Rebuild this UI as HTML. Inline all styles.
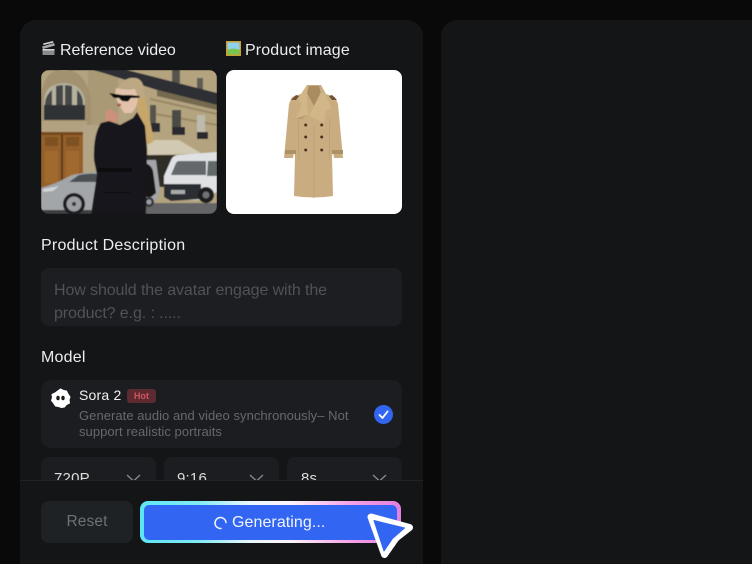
<!DOCTYPE html>
<html><head><meta charset="utf-8"><style>
*{box-sizing:border-box;margin:0;padding:0}
html,body{width:752px;height:564px;overflow:hidden;background:#09090a}
body{position:relative;font-family:"Liberation Sans",sans-serif}
.a{position:absolute}
.t{position:absolute;white-space:nowrap}
</style></head><body>
<div class="a" style="left:20px;top:20px;width:403px;height:560px;background:#141517;border-radius:16px"></div>
<div class="a" style="left:441px;top:20px;width:330px;height:560px;background:#141517;border-radius:16px"></div>

<svg class="a" style="left:41px;top:41px" width="16" height="16" viewBox="0 0 16 16"><path d="M1 5.500l12-3.500 1 2.500-12 3.500z" fill="#a8a8a8"/><path d="M2 2.500l10-2.500.5 1.500-10 2.500z" fill="#d8d8d8"/><path d="M1.500 8h12v6h-12z" fill="#8a8a8a"/><path d="M1.500 8h12v1.500h-12z" fill="#d5d5d5"/></svg>
<div class="t" style="left:60px;top:42px;font-size:16px;line-height:18px;color:#eceded;letter-spacing:-.05px">Reference video</div>
<svg class="a" style="left:226px;top:41px" width="15" height="15" viewBox="0 0 15 15"><rect width="15" height="15" fill="#c9a032"/><rect x="1.500" y="1.500" width="12" height="12" fill="#8fd0ee"/><path d="M1.500 9q5-3 12 0v4.500h-12z" fill="#79c552"/></svg>
<div class="t" style="left:245px;top:42px;font-size:16px;line-height:18px;color:#eceded;letter-spacing:.13px">Product image</div>

<svg class="a" style="left:41px;top:70px;border-radius:8px" width="176" height="144" viewBox="41 70 176 144">
<defs><filter id="b" x="-5%" y="-5%" width="110%" height="110%"><feGaussianBlur stdDeviation=".5"/></filter></defs>
<g filter="url(#b)">
<rect x="41" y="70" width="176" height="144" fill="#b3a37f"/>
<path d="M88 70h30v62H88z" fill="#a99974"/>
<path d="M150 98l67 15v2l-67-15zM150 112l67 12v2l-67-12z" fill="#978763"/>
<rect x="172" y="70" width="8" height="13" fill="#55534c"/><rect x="197" y="78" width="6" height="14" fill="#5f5c52"/>
<path d="M93 70h34l90 23v12l-60-15-50-16z" fill="#2d2f34"/>
<path d="M157 90l60 15v5l-60-14z" fill="#75694f"/>
<rect x="150" y="105" width="6" height="20" fill="#56544c"/><rect x="172" y="110" width="9" height="18" fill="#4c4b45"/><rect x="197" y="115" width="8" height="17" fill="#bdbbae"/>
<rect x="150" y="123" width="10" height="9" fill="#2a2b2e"/><rect x="172" y="127" width="13" height="8" fill="#2a2b2e"/><rect x="197" y="132" width="11" height="7" fill="#2a2b2e"/>
<path d="M41 132V97q2-27 23-28 22 2 27 30v33z" fill="#a39270"/>
<path d="M44 120V100q1-16 20-17 18 1 21 17v20z" fill="#b5b19c"/>
<path d="M45 105q0-9 7-15v15zM56 86l7-1v20h-7zM65 85l7 1v19h-7zM77 90q6 5 6 15h-6z" fill="#44474a"/>
<rect x="44" y="105" width="41" height="15" fill="#2e3034"/>
<rect x="42" y="121" width="45" height="11" fill="#b3a27f"/>
<rect x="83" y="125" width="16" height="48" fill="#b3a485"/>
<rect x="41" y="132" width="42" height="56" fill="#95602a"/><rect x="61" y="132" width="2" height="56" fill="#5d3a16"/><rect x="41" y="132" width="42" height="3" fill="#744a1c"/>
<rect x="45" y="137" width="13" height="9" fill="#7d5120"/><rect x="66" y="137" width="13" height="9" fill="#7d5120"/><rect x="45" y="151" width="13" height="32" fill="#a06a2e"/><rect x="66" y="151" width="13" height="32" fill="#a06a2e"/>
<path d="M147 140l32 0 25 15-22-1-34 1z" fill="#d2c9b2"/>
<rect x="146" y="155" width="30" height="32" fill="#2f2e28"/>
<rect x="41" y="203" width="176" height="11" fill="#656568"/>
<rect x="41" y="206" width="50" height="8" fill="#3d3d3f"/>
<path d="M164 176l7-16q2-5 8-5l38-3v40l-16 8h-30l-7-4z" fill="#dfe1e3"/>
<path d="M171 175l5-12q1-2 4-2h26v14zM208 161h9v15h-10z" fill="#63676b"/>
<path d="M164 184h37v15l-30 2-7-4z" fill="#2a2d33"/><rect x="171" y="190" width="14" height="4" fill="#a8aaac"/>
<circle cx="206" cy="195" r="8" fill="#1c1c1e"/><circle cx="206" cy="195" r="3.500" fill="#6f7174"/>
<path d="M41 188l15-5 16-8q14-3 28-3l2 38H41z" fill="#a3a6a9"/><path d="M69 182l10-7q10-2 19-1l-1 8z" fill="#4a4f53"/><path d="M43 189l16-3-6 5-10 1z" fill="#d2d4d6"/>
<circle cx="74" cy="204" r="11" fill="#1d1e20"/><circle cx="74" cy="204" r="7.500" fill="#9b9ea2"/><circle cx="74" cy="204" r="2" fill="#333"/>
<path d="M146 160h10l4 30-3 10-12 4z" fill="#a3a5a9"/><circle cx="149" cy="202" r="5" fill="#35353a"/><circle cx="149" cy="202" r="2.500" fill="#9b9ea2"/>
<path d="M136 163q14-2 17 8l3 22-5 4-9 0-7-18z" fill="#131315"/>
<path d="M136 92l7-4 6 27 5 26-9 5-5-14z" fill="#c6a66b"/>
<path d="M118 88q7-12 18-10 8 2 8 14l-1 8-7-5-4-7z" fill="#bda884"/>
<path d="M116 88q9 2 19 1l3 9q-1 11-7 15l-7 0-6-10-3-8z" fill="#e3c2ac"/>
<path d="M109 93l13 2 7 0 11 1-1 2-8 0-3 3.500-6-.5-3-3-5 0z" fill="#0f0f10"/>
<ellipse cx="119" cy="105" rx="2" ry="1.500" fill="#a85a55"/>
<path d="M105 115q2-7 6-6l8 6-2 7-11 1z" fill="#cb917a"/>
<path d="M137 112l8 14 2 24-1 64H91l6-39-3-15q-1-25 7-37l8-2 11 4 13-7z" fill="#19191b"/>
<rect x="98" y="168" width="34" height="4" fill="#0a0a0b"/>
<rect x="104" y="192" width="26" height="1" fill="#0a0a0b"/>
</g>
</svg>

<div class="a" style="left:226px;top:70px;width:176px;height:144px;background:#fff;border-radius:8px"></div>
<svg class="a" style="left:226px;top:70px" width="176" height="144" viewBox="226 70 176 144">
<path d="M307 85h14l5 9 9 3 3 7 5 54h-9l-1-7-1 5 1 40q-19 3-39 0l1-40-1-5-1 7h-9l5-54 3-7 9-3z" fill="#c9ad80"/>
<path d="M309 86h10l2 7-7 13-7-13z" fill="#a98d60"/>
<path d="M307 85l-9 14 4 5-6 14 11-3 17 8 2-12 5-3-5-14-5-2-7 14-5 10-2-10z" fill="#d1b688"/>
<path d="M291 100l5-5 3 1-3 4zM337 100l-5-5-3 1 3 4z" fill="#6d5234"/>
<path d="M314 125v73M298 118l1 42M330 118l-1 42" fill="none" stroke="#b69a6f" stroke-width=".6"/>
<path d="M298 119l-1-1 10-3 -5 4z" fill="#b99c6f"/>
<rect x="285" y="150" width="11" height="4" fill="#ad9064"/><rect x="332" y="150" width="11" height="4" fill="#ad9064"/>
<g fill="#4a3420"><circle cx="305.700" cy="125" r="1.500"/><circle cx="321.700" cy="125" r="1.500"/><circle cx="305.700" cy="137" r="1.500"/><circle cx="321.700" cy="137" r="1.500"/><circle cx="305.700" cy="150" r="1.500"/><circle cx="321.700" cy="150" r="1.500"/></g>
</svg>

<div class="t" style="left:41px;top:237px;font-size:16px;line-height:18px;color:#eceded;letter-spacing:.25px">Product Description</div>
<div class="a" style="left:41px;top:268px;width:361px;height:58px;background:#1d1e21;border-radius:8px"></div>
<div class="t" style="left:54px;top:279px;font-size:16px;line-height:23px;color:#505256;letter-spacing:-.1px">How should the avatar engage with the<br>product? e.g. : .....</div>

<div class="t" style="left:41px;top:349px;font-size:16px;line-height:18px;color:#eceded;letter-spacing:.2px">Model</div>
<div class="a" style="left:41px;top:380px;width:361px;height:68px;background:#1c1d20;border-radius:10px"></div>
<svg class="a" style="left:50px;top:388px" width="21" height="21" viewBox="0 0 21 21"><path d="M10.500 1l3 1.500 3 .5 1.500 3 2 3-1 3 .5 3-3 1.500-2 2.500-3 .5-3-1-3-.5-2-3-2-2.500 1-3-.5-3 3-1.500z" fill="#fff" stroke="#fff" stroke-linejoin="round"/><ellipse cx="8" cy="10" rx="1.700" ry="2.300" fill="#1a1a1a"/><ellipse cx="13" cy="10" rx="1.700" ry="2.300" fill="#1a1a1a"/></svg>
<div class="t" style="left:79px;top:387px;font-size:14px;line-height:17px;color:#f0f0f0;letter-spacing:.2px">Sora 2</div>
<div class="a" style="left:127px;top:389px;width:29px;height:14px;background:#5c2a30;border-radius:3px"></div>
<div class="t" style="left:127px;top:389px;width:29px;text-align:center;font-size:9px;line-height:14px;font-weight:bold;color:#d0565f">Hot</div>
<div class="t" style="left:79px;top:408px;font-size:13px;line-height:16px;color:#66686c;letter-spacing:.05px">Generate audio and video synchronously– Not<br>support realistic portraits</div>
<svg class="a" style="left:374px;top:405px" width="19" height="19" viewBox="0 0 19 19"><circle cx="9.500" cy="9.500" r="9.500" fill="#3366f0"/><path d="M5.500 10l3 3 5-6.500" fill="none" stroke="#fff" stroke-width="1.800" stroke-linecap="round" stroke-linejoin="round"/></svg>

<div class="a" style="left:41px;top:457px;width:115px;height:40px;background:#1c1d20;border-radius:8px"></div>
<div class="a" style="left:164px;top:457px;width:115px;height:40px;background:#1c1d20;border-radius:8px"></div>
<div class="a" style="left:287px;top:457px;width:115px;height:40px;background:#1c1d20;border-radius:8px"></div>
<div class="t" style="left:54px;top:470px;font-size:15px;line-height:18px;color:#dcdcdd;letter-spacing:.2px">720P</div>
<div class="t" style="left:177px;top:470px;font-size:15px;line-height:18px;color:#dcdcdd;letter-spacing:.2px">9:16</div>
<div class="t" style="left:301px;top:470px;font-size:15px;line-height:18px;color:#dcdcdd;letter-spacing:.2px">8s</div>
<svg class="a" style="left:0;top:470px" width="423" height="12"><path d="M127 5l6.500 6 6.500-6M250 5l6.500 6 6.500-6M373 5l6.500 6 6.500-6" fill="none" stroke="#8a8b8e" stroke-width="1.300"/></svg>

<div class="a" style="left:20px;top:480px;width:403px;height:84px;background:#141517;border-top:1px solid #222326"></div>
<div class="a" style="left:41px;top:501px;width:92px;height:42px;background:#1f2225;border-radius:8px"></div>
<div class="t" style="left:41px;top:501px;width:92px;text-align:center;font-size:15.500px;line-height:42px;color:#6f7173;letter-spacing:.1px">Reset</div>
<div class="a" style="left:140px;top:501px;width:261px;height:42px;border-radius:8px;background:linear-gradient(90deg,#5de6f6 0%,#7feaf5 22%,#e8f8fb 42%,#fdf3fb 58%,#f49ee6 82%,#e47fdf 100%)"></div>
<div class="a" style="left:144px;top:505px;width:253px;height:35px;border-radius:5px;background:#3266f2"></div>
<svg class="a" style="left:213px;top:515px" width="16" height="16" viewBox="0 0 16 16"><path d="M13 7.500A5.500 5.500 0 1 0 8 13.500" fill="none" stroke="#f2f5ff" stroke-width="1.500" stroke-linecap="round"/></svg>
<div class="t" style="left:232px;top:514px;font-size:16px;line-height:18px;color:#f2f5ff;letter-spacing:.07px">Generating...</div>
<svg class="a" style="left:360px;top:505px" width="60" height="59" viewBox="360 505 60 59">
<path d="M371 517L409.500 527.500 396 538 384.500 554.500z" fill="#fff" stroke="#fff" stroke-width="7" stroke-linejoin="round"/>
<path d="M374 520.500L404.500 528 392.500 538.500 384 551z" fill="#3266f2" stroke="#3266f2" stroke-width="1" stroke-linejoin="round"/>
</svg>
</body></html>
